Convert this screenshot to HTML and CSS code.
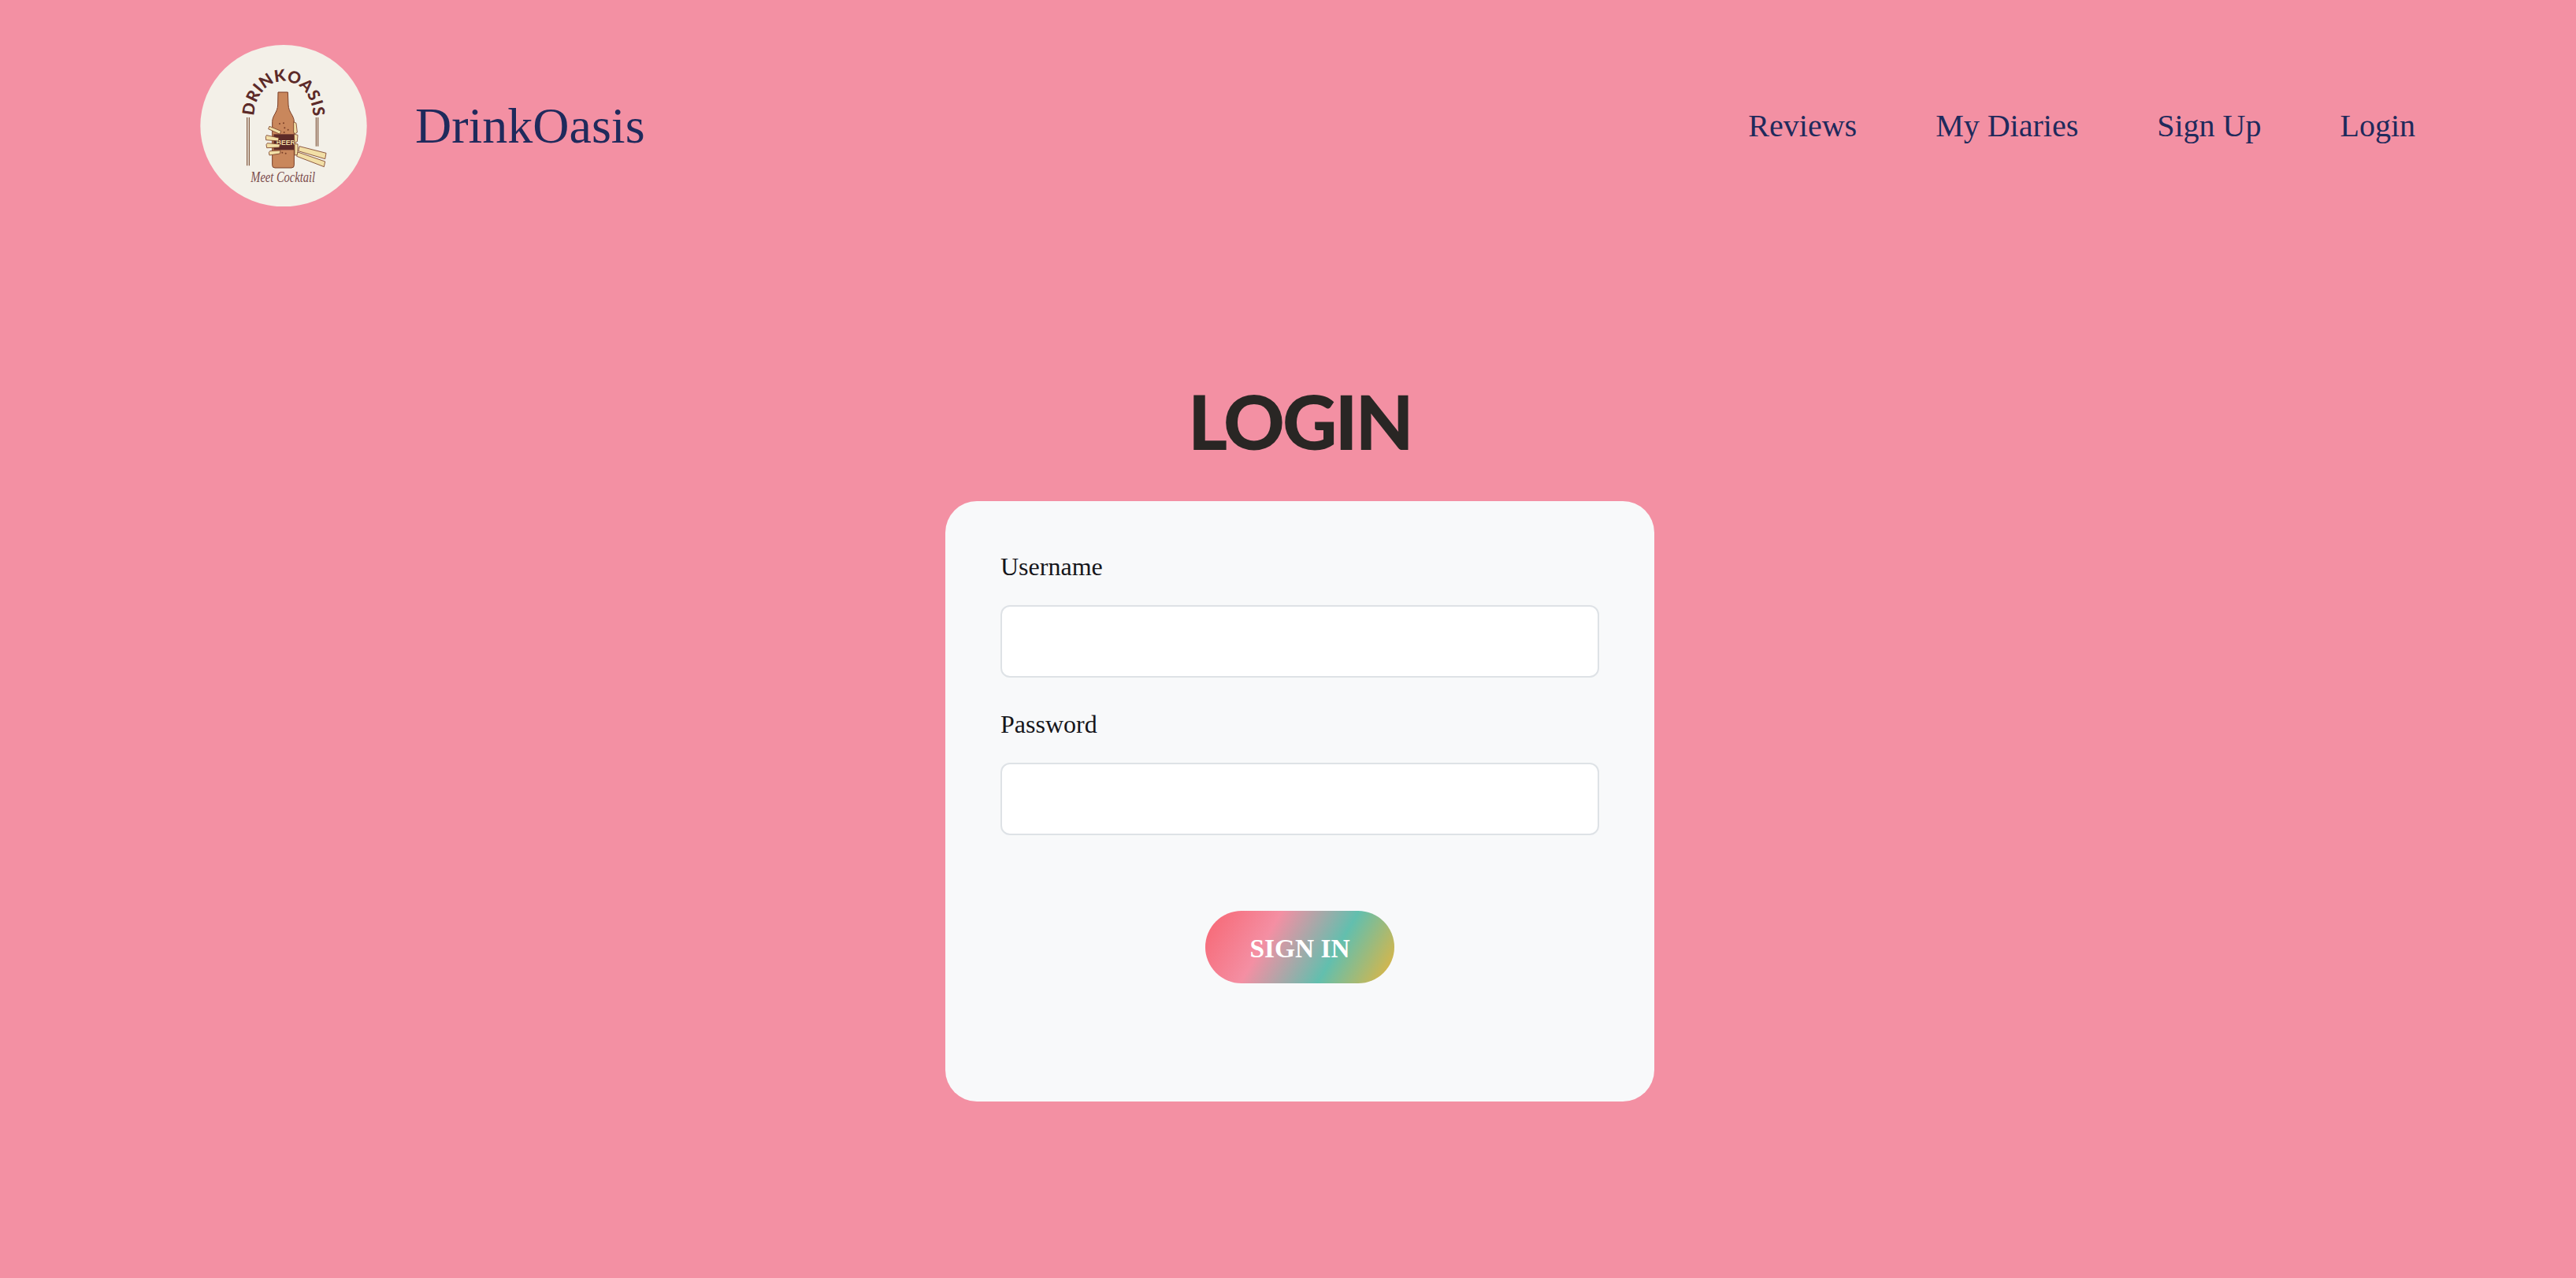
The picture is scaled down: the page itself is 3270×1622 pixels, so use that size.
FILE: index.html
```html
<!DOCTYPE html>
<html lang="en">
<head>
<meta charset="utf-8">
<title>DrinkOasis</title>
<link rel="stylesheet" href="styles.css">
</head>
<body>
<header class="site-header">
  <a class="brand" href="#">
    <svg class="logo" viewBox="73 52 634 615" aria-label="DrinkOasis logo">
      <ellipse cx="390" cy="360" rx="317" ry="308" fill="#f3f0e8"/>
      <defs><path id="arc" d="M278 322 A112 132 0 0 1 502 322"/></defs>
      <text class="logo-arc"><textPath href="#arc" textLength="385" lengthAdjust="spacing">DRINKOASIS</textPath></text>
      <g stroke="#7d5238" stroke-width="3.5" fill="none">
        <path d="M251 328V512M259 328V512M514 328V438M521 328V438"/>
      </g>
      <path d="M369 232H406L408 280C409 310 430 320 430 345V510Q430 520 420 520H357Q347 520 347 510V345C347 320 367 310 368 280Z" fill="#c9875c" stroke="#7a3f28" stroke-width="3"/>
      <g fill="#7a3f28"><circle cx="375" cy="352" r="3"/><circle cx="390" cy="350" r="3"/><circle cx="394" cy="368" r="3"/><circle cx="407" cy="375" r="3"/><circle cx="392" cy="385" r="3"/><circle cx="385" cy="462" r="3"/><circle cx="398" cy="465" r="3"/></g>
      <path d="M352 392H430V452H352Z" fill="#5c2a28"/>
      <text class="logo-beer" x="362" y="432">BEER</text>
      <g fill="#f2dfa6" stroke="#7a3f28" stroke-width="2.5">
        <path d="M332 372L336 362L380 380L376 392Z"/>
        <path d="M322 402L325 396L372 406L370 418L323 414Z"/>
        <path d="M324 432L328 426L376 430L374 442L326 444Z"/>
        <path d="M334 462L338 456L378 454L376 466L336 472Z"/>
        <path d="M428 345L438 350L442 385L434 390L428 385Z"/>
        <path d="M430 392L444 395L442 420L432 425Z"/>
        <path d="M432 428L444 430L444 470L432 472Z"/>
        <path d="M450 438L552 464L548 486L446 456Z"/>
        <path d="M444 460L548 496L544 516L440 476Z"/>
      </g>
      <text class="logo-tag" x="265" y="575" textLength="245" lengthAdjust="spacingAndGlyphs">Meet Cocktail</text>
    </svg>
    <span class="brand-name">DrinkOasis</span>
  </a>
  <nav class="site-nav">
    <a href="#">Reviews</a>
    <a href="#">My Diaries</a>
    <a href="#">Sign Up</a>
    <a href="#">Login</a>
  </nav>
</header>
<main class="login">
  <h1 class="login-title">LOGIN</h1>
  <form class="login-card">
    <label class="field">
      <span class="field-label">Username</span>
      <input class="field-input" type="text">
    </label>
    <label class="field">
      <span class="field-label">Password</span>
      <input class="field-input" type="password">
    </label>
    <button class="submit" type="button">SIGN IN</button>
  </form>
</main>
</body>
</html>
```
FILE: styles.css
```css
* { box-sizing: border-box; }
html, body { margin: 0; height: 100%; }
body {
  background: #f390a3;
  font-family: "Liberation Serif", "Times New Roman", serif;
  min-height: 1622px;
  overflow: hidden;
}
a { color: inherit; text-decoration: none; }

.site-header {
  display: flex;
  align-items: center;
  justify-content: space-between;
  padding: 57px 204px 0 254px;
  color: #1f2a5c;
}
.brand { display: flex; align-items: center; gap: 61px; }
.logo { display: block; width: 212px; height: 205px; }
.brand-name { font-size: 64px; }
.site-nav { display: flex; gap: 100px; font-size: 40px; }

.logo-arc { font-family: "Lato", sans-serif; font-weight: 900; font-size: 62px; fill: #5c2a28; }
.logo-beer { font-family: "Liberation Sans", sans-serif; font-weight: 700; font-size: 26px; fill: #f2dfa6; }
.logo-tag { font-family: "Liberation Serif", serif; font-style: italic; font-size: 54px; fill: #7a4a4a; }

.login {
  display: flex;
  flex-direction: column;
  align-items: center;
  padding-left: 30px;
  margin-top: 210px;
}
.login-title {
  margin: 0 0 40px;
  height: 124px;
  font-family: "Lato", sans-serif;
  font-weight: 900;
  font-size: 96px;
  line-height: 124px;
  color: #292624;
  letter-spacing: -3px;
}
.login-card {
  display: flex;
  flex-direction: column;
  width: 900px;
  height: 762px;
  padding: 62px 70px 0;
  background: #f8f9fa;
  border-radius: 40px;
}
.field { display: block; margin-bottom: 38px; }
.field-label {
  display: block;
  height: 70px;
  font-size: 32px;
  line-height: 42px;
  color: #16161a;
}
.field-input {
  display: block;
  width: 100%;
  height: 92px;
  background: #fff;
  border: 2px solid #dee2e6;
  border-radius: 12px;
}
.submit {
  align-self: center;
  width: 240px;
  height: 92px;
  margin-top: 58px;
  padding: 3px 0 0;
  border: 0;
  border-radius: 46px;
  background: linear-gradient(120deg, #f76572 0%, #f48fa3 33.3%, #62bfae 66.6%, #d2b64e 94%);
  color: #fff;
  font-family: inherit;
  font-weight: 700;
  font-size: 33.4px;
}
```
